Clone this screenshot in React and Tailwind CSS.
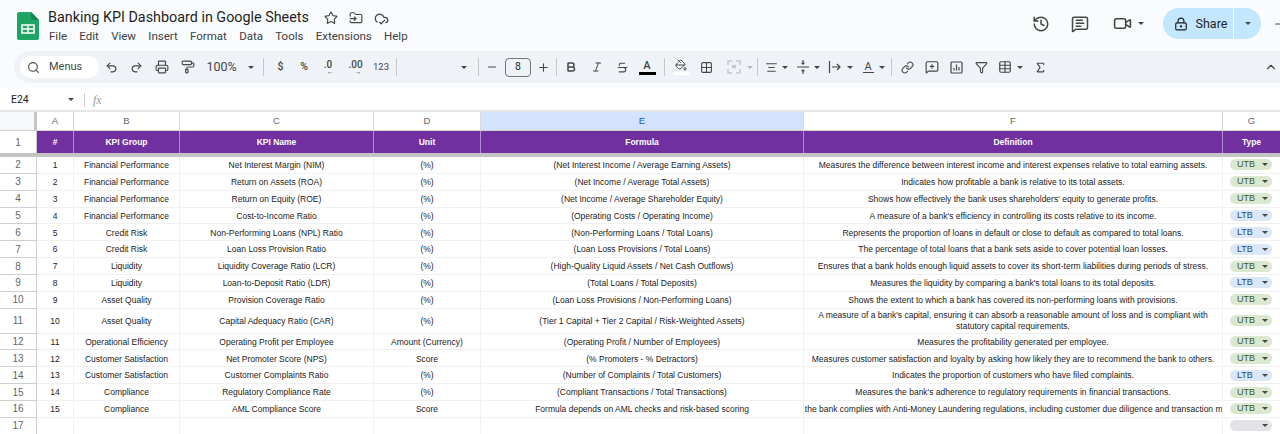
import { Star, Search, Undo2, Redo2, Printer, PaintRoller, Minus, Plus, Bold, Italic, Strikethrough, PaintBucket, Grid2x2, AlignCenter, Link, MessageSquarePlus, Filter, Table, Sigma, ChevronUp, History, MessageSquareText, Video, LockKeyhole, CloudCheck, FolderInput, ArrowRightToLine } from "lucide-react";

const rows = [
  [2, 1, "Financial Performance", "Net Interest Margin (NIM)", "(%)", "(Net Interest Income / Average Earning Assets)", "Measures the difference between interest income and interest expenses relative to total earning assets.", "UTB"],
  [3, 2, "Financial Performance", "Return on Assets (ROA)", "(%)", "(Net Income / Average Total Assets)", "Indicates how profitable a bank is relative to its total assets.", "UTB"],
  [4, 3, "Financial Performance", "Return on Equity (ROE)", "(%)", "(Net Income / Average Shareholder Equity)", "Shows how effectively the bank uses shareholders' equity to generate profits.", "UTB"],
  [5, 4, "Financial Performance", "Cost-to-Income Ratio", "(%)", "(Operating Costs / Operating Income)", "A measure of a bank's efficiency in controlling its costs relative to its income.", "LTB"],
  [6, 5, "Credit Risk", "Non-Performing Loans (NPL) Ratio", "(%)", "(Non-Performing Loans / Total Loans)", "Represents the proportion of loans in default or close to default as compared to total loans.", "LTB"],
  [7, 6, "Credit Risk", "Loan Loss Provision Ratio", "(%)", "(Loan Loss Provisions / Total Loans)", "The percentage of total loans that a bank sets aside to cover potential loan losses.", "LTB"],
  [8, 7, "Liquidity", "Liquidity Coverage Ratio (LCR)", "(%)", "(High-Quality Liquid Assets / Net Cash Outflows)", "Ensures that a bank holds enough liquid assets to cover its short-term liabilities during periods of stress.", "UTB"],
  [9, 8, "Liquidity", "Loan-to-Deposit Ratio (LDR)", "(%)", "(Total Loans / Total Deposits)", "Measures the liquidity by comparing a bank's total loans to its total deposits.", "LTB"],
  [10, 9, "Asset Quality", "Provision Coverage Ratio", "(%)", "(Loan Loss Provisions / Non-Performing Loans)", "Shows the extent to which a bank has covered its non-performing loans with provisions.", "UTB"],
  [11, 10, "Asset Quality", "Capital Adequacy Ratio (CAR)", "(%)", "(Tier 1 Capital + Tier 2 Capital / Risk-Weighted Assets)", "A measure of a bank's capital, ensuring it can absorb a reasonable amount of loss and is compliant with statutory capital requirements.", "UTB"],
  [12, 11, "Operational Efficiency", "Operating Profit per Employee", "Amount (Currency)", "(Operating Profit / Number of Employees)", "Measures the profitability generated per employee.", "UTB"],
  [13, 12, "Customer Satisfaction", "Net Promoter Score (NPS)", "Score", "(% Promoters - % Detractors)", "Measures customer satisfaction and loyalty by asking how likely they are to recommend the bank to others.", "UTB"],
  [14, 13, "Customer Satisfaction", "Customer Complaints Ratio", "(%)", "(Number of Complaints / Total Customers)", "Indicates the proportion of customers who have filed complaints.", "LTB"],
  [15, 14, "Compliance", "Regulatory Compliance Rate", "(%)", "(Compliant Transactions / Total Transactions)", "Measures the bank's adherence to regulatory requirements in financial transactions.", "UTB"],
  [16, 15, "Compliance", "AML Compliance Score", "Score", "Formula depends on AML checks and risk-based scoring", "How well the bank complies with Anti-Money Laundering regulations, including customer due diligence and transaction monitoring.", "UTB"],
];

const Caret = ({ className = "" }) => (
  <span className={`w-0 h-0 border-x-[3px] border-x-transparent border-t-[3px] border-t-[#444746] ${className}`} />
);

const Slot = ({ className, children }) => (
  <div className={`h-full shrink-0 flex items-center justify-center text-[#444746] ${className}`}>{children}</div>
);

const Sep = ({ className }) => (
  <Slot className={className}><span className="w-px h-[18px] bg-[#c7c7c7]" /></Slot>
);

const SheetsLogo = () => (
  <svg width="22" height="28" viewBox="0 0 22 28">
    <path d="M2 0h12l8 8v18a2 2 0 0 1-2 2H2a2 2 0 0 1-2-2V2a2 2 0 0 1 2-2z" fill="#1fa463" />
    <path d="M14 0l8 8h-6a2 2 0 0 1-2-2z" fill="#0f8a4c" />
    <path d="M5 13h12v8H5z" fill="none" stroke="#fff" strokeWidth="1.6" />
    <path d="M5 17h12M11 13v8" stroke="#fff" strokeWidth="1.4" />
  </svg>
);

const MergeIcon = () => (
  <svg width="14" height="14" viewBox="0 0 14 14" fill="none" stroke="#b4b7ba" strokeWidth="1.1">
    <path d="M1 5V1h4M9 1h4v4M1 9v4h4M9 13h4V9M5 5l2 1.500L5 8M9 5L7 6.500 9 8" />
  </svg>
);

const VAlignIcon = () => (
  <svg width="14" height="14" viewBox="0 0 14 14" fill="#444746">
    <path d="M1 6.400h12v1.200H1zM7 5L4.800 2.800h1.600V0h1.200v2.800h1.600zM7 9l2.200 2.200H7.600V14H6.400v-2.800H4.800z" />
  </svg>
);

const WrapIcon = () => (
  <svg width="14" height="14" viewBox="0 0 14 14" fill="none" stroke="#444746" strokeWidth="1.2">
    <path d="M1.500 1v12M4 7h8M9 4l3 3-3 3" />
  </svg>
);

const ChartIcon = () => (
  <svg width="13" height="13" viewBox="0 0 13 13" fill="none" stroke="#444746" strokeWidth="1.200">
    <rect x="1" y="1" width="11" height="11" rx="1" />
    <path d="M4 9.500V7M6.500 9.500v-6M9 9.500V6" />
  </svg>
);

const Chip = ({ type }) => {
  const bg = type === "UTB" ? "bg-[#d9e8cf]" : type === "LTB" ? "bg-[#dae7f7]" : "bg-[#e2e3e6]";
  const fg = type === "UTB" ? "text-[#3d5a2c]" : "text-[#2c4a6e]";
  return (
    <div className={`w-[42px] h-[11px] rounded-full flex items-center pl-[7px] pr-[4px] justify-between ${bg}`}>
      <span className={`text-[9px] leading-none ${fg}`}>{type}</span>
      <Caret className="border-t-[#222]" />
    </div>
  );
};

const Cell = ({ className, children }) => (
  <div className={`shrink-0 h-full pt-[1px] flex items-center justify-center text-center border-r border-b border-[#f1f1f1] overflow-hidden ${className}`}>{children}</div>
);

const SheetRow = ({ r, tall }) => (
  <div className={`flex ${tall ? "h-[24.8px]" : "h-[16.87px]"}`}>
    <div className="w-[37px] shrink-0 h-full pt-[1px] flex items-center justify-center bg-white text-[#666] border-r border-b border-[#cfcfcf] text-[10px]">{r[0]}</div>
    <Cell className="w-[37px]">{r[1]}</Cell>
    <Cell className="w-[106px]">{r[2]}</Cell>
    <Cell className="w-[194px]">{r[3]}</Cell>
    <Cell className="w-[107px]">{r[4]}</Cell>
    <Cell className="w-[323px]">{r[5]}</Cell>
    <Cell className={`w-[419px] ${tall ? "px-[10px] leading-[11px]" : "whitespace-nowrap"}`}>
      {r[0] === 16 ? <span className="shrink-0">{r[6]}</span> : r[6]}
    </Cell>
    <div className="w-[57px] shrink-0 h-full pr-[1px] flex items-center justify-center border-b border-[#f1f1f1]"><Chip type={r[7]} /></div>
  </div>
);

export default function App() {
  return (
    <div className="w-[1280px] h-[434px] overflow-hidden bg-white font-['Liberation_Sans',sans-serif]">
      {/* top bar */}
      <div className="h-[51px] bg-[#f9fbfd] flex font-['Roboto',sans-serif]">
        <div className="w-[48px] shrink-0 pl-[17px] pt-[12px]"><SheetsLogo /></div>
        <div className="flex-1 flex flex-col">
          <div className="flex items-center h-[24px] mt-[6px]">
            <span className="text-[14.350px] leading-none text-[#1f1f1f] w-[275px] whitespace-nowrap">Banking KPI Dashboard in Google Sheets</span>
            <Star size={14} className="text-[#444746] ml-[1px]" />
            <FolderInput size={14} className="text-[#444746] ml-[11px]" />
            <CloudCheck size={15} className="text-[#444746] ml-[11px]" />
          </div>
          <div className="flex items-center gap-[12.300px] text-[11.500px] leading-none text-[#3c4043] h-[13px] pl-[1px]">
            <span>File</span><span>Edit</span><span>View</span><span>Insert</span><span>Format</span><span>Data</span><span>Tools</span><span>Extensions</span><span>Help</span>
          </div>
        </div>
        <div className="flex items-center h-[47px] text-[#444746]">
          <History size={18} className="mr-[21px]" />
          <MessageSquareText size={18} className="mr-[24px]" />
          <Video size={19} className="mr-[6px]" />
          <Caret className="mr-[19px]" />
          <div className="w-[98px] h-[31px] rounded-full bg-[#c2e7ff] flex items-center text-[#1f1f1f]">
            <div className="w-[71px] h-full pl-[5px] pt-[1px] flex items-center justify-center gap-[8px] border-r border-[#f0f8fe]">
              <LockKeyhole size={14} />
              <span className="text-[12.500px]">Share</span>
            </div>
            <div className="flex-1 flex items-center justify-center"><Caret /></div>
          </div>
          <ArrowRightToLine size={14} className="ml-[13px] mr-[-8px]" />
        </div>
      </div>

      {/* toolbar */}
      <div className="h-[37px] bg-[#f9fbfd] pb-[5px]">
        <div className="ml-[14px] h-[32px] bg-[#eff3f8] rounded-l-full flex items-center pl-[6px] font-['Roboto',sans-serif]">
          <div className="w-[79px] h-[22px] shrink-0 bg-white rounded-full flex items-center pl-[7px] gap-[9px] text-[#444746]">
            <Search size={13} />
            <span className="text-[11px]">Menus</span>
          </div>
          <Slot className="w-[25px]"><Undo2 size={13} /></Slot>
          <Slot className="w-[24px]"><Redo2 size={13} /></Slot>
          <Slot className="w-[27px]"><Printer size={14} /></Slot>
          <Slot className="w-[25px]"><PaintRoller size={14} /></Slot>
          <Slot className="w-[43px] text-[12.500px]">100%</Slot>
          <Slot className="w-[15px]"><Caret /></Slot>
          <Sep className="w-[11px]" />
          <Slot className="w-[23px] text-[10.500px] font-medium">$</Slot>
          <Slot className="w-[24px] text-[10.500px] font-medium">%</Slot>
          <Slot className="w-[24px] flex-col text-[10px] font-medium leading-none">
            <span>.0</span>
            <span className="text-[7px] leading-[5px] ml-[5px]">←</span>
          </Slot>
          <Slot className="w-[31px] flex-col text-[10px] font-medium leading-none">
            <span>.00</span>
            <span className="text-[7px] leading-[5px] ml-[5px]">→</span>
          </Slot>
          <Slot className="w-[20px] text-[9.500px]">123</Slot>
          <Sep className="w-[10px]" />
          <Slot className="w-[57px]" />
          <Slot className="w-[12px]"><Caret /></Slot>
          <Sep className="w-[16px]" />
          <Slot className="w-[12px]"><Minus size={12} /></Slot>
          <div className="w-[26px] h-[19px] shrink-0 ml-[7px] border border-[#747775] rounded-[4px] flex items-center justify-center text-[10.500px] text-[#1f1f1f]">8</div>
          <Slot className="w-[24px]"><Plus size={13} /></Slot>
          <Sep className="w-[3px]" />
          <Slot className="w-[26px]"><Bold size={12} strokeWidth={3} /></Slot>
          <Slot className="w-[26px]"><Italic size={12} /></Slot>
          <Slot className="w-[24px]"><Strikethrough size={13} /></Slot>
          <Slot className="w-[26px] flex-col pt-[1px]">
            <span className="text-[11px] leading-[12px] font-medium">A</span>
            <span className="w-[17px] h-[3px] bg-black" />
          </Slot>
          <Sep className="w-[8px]" />
          <Slot className="w-[26px] flex-col">
            <PaintBucket size={12} />
            <span className="w-[17px] h-[3px] bg-white mt-[1px]" />
          </Slot>
          <Slot className="w-[25px]"><Grid2x2 size={13} /></Slot>
          <Slot className="w-[26px] pl-[3px]"><MergeIcon /></Slot>
          <Slot className="w-[9px]"><Caret className="border-t-[#b4b7ba]" /></Slot>
          <Sep className="w-[7px]" />
          <Slot className="w-[20px]"><AlignCenter size={13} /></Slot>
          <Slot className="w-[8px]"><Caret /></Slot>
          <Slot className="w-[24px] pl-[4px]"><VAlignIcon /></Slot>
          <Slot className="w-[8px]"><Caret /></Slot>
          <Slot className="w-[25px] pl-[3px]"><WrapIcon /></Slot>
          <Slot className="w-[8px]"><Caret /></Slot>
          <Slot className="w-[24px] pl-[4px] flex-col">
            <span className="text-[11px] leading-[11px]">A</span>
            <span className="w-[11px] h-px bg-[#444746]" />
          </Slot>
          <Slot className="w-[8px]"><Caret /></Slot>
          <Sep className="w-[10px]" />
          <Slot className="w-[23px]"><Link size={13} /></Slot>
          <Slot className="w-[25px]"><MessageSquarePlus size={14} /></Slot>
          <Slot className="w-[25px]"><ChartIcon /></Slot>
          <Slot className="w-[25px]"><Filter size={13} /></Slot>
          <Slot className="w-[22px]"><Table size={14} /></Slot>
          <Slot className="w-[8px]"><Caret /></Slot>
          <Slot className="w-[32px]"><Sigma size={13} /></Slot>
          <Slot className="ml-auto mr-[1px] w-[16px]"><ChevronUp size={14} /></Slot>
        </div>
      </div>

      {/* formula bar */}
      <div className="h-[24px] pt-[1px] flex items-center bg-white text-[#444746] border-b-[2px] border-[#e5e5e5]">
        <span className="w-[64px] pl-[11px] text-[10.500px] text-[#1f1f1f] font-['Roboto',sans-serif]">E24</span>
        <Caret className="ml-[4px]" />
        <span className="w-px h-[14px] bg-[#d0d0d0] ml-[10px]" />
        <span className="ml-[8px] text-[12px] italic font-['Liberation_Serif',serif] text-[#9a9a9a]">fx</span>
      </div>

      {/* sheet */}
      <div className="text-[8.500px] text-[#222] leading-none">
        <div className="flex h-[19px] text-[#666] text-[9.500px] border-b border-[#d0d0d0]">
          <div className="w-[37px] shrink-0 h-full bg-[#f8f9fa] border-r-[3px] border-[#c4c4c4]" />
          <div className="w-[37px] shrink-0 flex items-center justify-center border-r border-[#d8d8d8]">A</div>
          <div className="w-[106px] shrink-0 flex items-center justify-center border-r border-[#d8d8d8]">B</div>
          <div className="w-[194px] shrink-0 flex items-center justify-center border-r border-[#d8d8d8]">C</div>
          <div className="w-[107px] shrink-0 flex items-center justify-center border-r border-[#d8d8d8]">D</div>
          <div className="w-[323px] shrink-0 flex items-center justify-center border-r border-[#d8d8d8] bg-[#d3e3fd] text-[#0b57d0]">E</div>
          <div className="w-[419px] shrink-0 flex items-center justify-center border-r border-[#d8d8d8]">F</div>
          <div className="w-[57px] shrink-0 flex items-center justify-center">G</div>
        </div>
        <div className="flex h-[22px] font-bold text-white">
          <div className="w-[37px] shrink-0 pt-[1px] flex items-center justify-center bg-white text-[#666] font-normal text-[10px] border-r border-[#c7c7c7]">1</div>
          <div className="w-[37px] shrink-0 pt-[1px] flex items-center justify-center bg-[#7030a0] border-r border-[#b48ad6]">#</div>
          <div className="w-[106px] shrink-0 pt-[1px] flex items-center justify-center bg-[#7030a0] border-r border-[#b48ad6]">KPI Group</div>
          <div className="w-[194px] shrink-0 pt-[1px] flex items-center justify-center bg-[#7030a0] border-r border-[#b48ad6]">KPI Name</div>
          <div className="w-[107px] shrink-0 pt-[1px] flex items-center justify-center bg-[#7030a0] border-r border-[#b48ad6]">Unit</div>
          <div className="w-[323px] shrink-0 pt-[1px] flex items-center justify-center bg-[#7030a0] border-r border-[#b48ad6]">Formula</div>
          <div className="w-[419px] shrink-0 pt-[1px] flex items-center justify-center bg-[#7030a0] border-r border-[#b48ad6]">Definition</div>
          <div className="w-[57px] shrink-0 pt-[1px] flex items-center justify-center bg-[#7030a0]">Type</div>
        </div>
        <div className="h-[4px] bg-[#c4c4c4]" />
        {rows.map((r) => (
          <SheetRow key={r[0]} r={r} tall={r[0] === 11} />
        ))}
        <SheetRow r={[17, "", "", "", "", "", "", ""]} />
      </div>
    </div>
  );
}
